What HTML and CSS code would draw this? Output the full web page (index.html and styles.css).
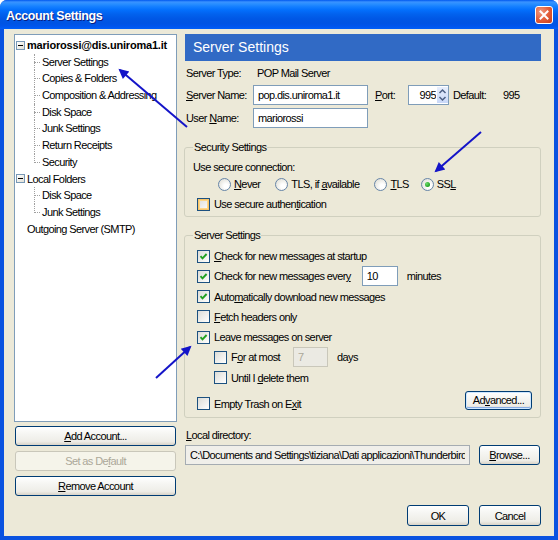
FILE: index.html
```html
<!DOCTYPE html>
<html>
<head>
<meta charset="utf-8">
<title>Account Settings</title>
<link rel="stylesheet" href="styles.css">
</head>
<body>
<div class="window">
  <div class="titlebar">
    <span class="title">Account Settings</span>
    <span class="close"><svg width="10" height="10" viewBox="0 0 10 10"><path d="M1.5 1.5 L8.5 8.5 M8.5 1.5 L1.5 8.5" stroke="#fff" stroke-width="2" stroke-linecap="square"/></svg></span>
  </div>
  <div class="client">
    <div class="leftcol">
      <div class="tree">
        <div class="row root"><span class="pm"></span><b>mariorossi@dis.uniroma1.it</b></div>
        <div class="leaf">Server Settings</div>
        <div class="leaf">Copies &amp; Folders</div>
        <div class="leaf">Composition &amp; Addressing</div>
        <div class="leaf">Disk Space</div>
        <div class="leaf">Junk Settings</div>
        <div class="leaf">Return Receipts</div>
        <div class="leaf last">Security</div>
        <div class="row root"><span class="pm"></span>Local Folders</div>
        <div class="leaf">Disk Space</div>
        <div class="leaf last">Junk Settings</div>
        <div class="row plain">Outgoing Server (SMTP)</div>
      </div>
      <div class="leftbtns">
        <button class="btn wide"><u>A</u>dd Account...</button>
        <button class="btn wide disabled">Set as De<u>f</u>ault</button>
        <button class="btn wide"><u>R</u>emove Account</button>
      </div>
    </div>
    <div class="rightcol">
      <div class="header">Server Settings</div>
      <div class="fields">
        <div class="frow typerow"><span class="flabel">Server Type:</span><span class="fvalue">POP Mail Server</span></div>
        <div class="frow"><span class="flabel"><u>S</u>erver Name:</span><input class="tb name" type="text" value="pop.dis.uniroma1.it"><span class="portlabel"><u>P</u>ort:</span><span class="port"><input class="portinput" type="text" value="995"><svg class="spin" width="11" height="16" viewBox="0 0 11 16"><path d="M2.5 6 L5.5 3 L8.5 6" fill="none" stroke="#4D6185" stroke-width="1.5"/><path d="M2.5 10 L5.5 13 L8.5 10" fill="none" stroke="#4D6185" stroke-width="1.5"/></svg></span><span class="deflabel">Default:</span><span class="defvalue">995</span></div>
        <div class="frow userrow"><span class="flabel">User <u>N</u>ame:</span><input class="tb name" type="text" value="mariorossi"></div>
      </div>
      <fieldset class="group security">
        <legend>Security Settings</legend>
        <div class="line">Use secure connection:</div>
        <div class="radios">
          <span class="opt o1"><span class="rb"></span><span><u>N</u>ever</span></span>
          <span class="opt o2"><span class="rb"></span><span>TLS, if <u>a</u>vailable</span></span>
          <span class="opt o3"><span class="rb"></span><span><u>T</u>LS</span></span>
          <span class="opt"><span class="rb on"></span><span>SS<u>L</u></span></span>
        </div>
        <div class="cbrow auth"><span class="cb hover"></span><span>Use secure authen<u>t</u>ication</span></div>
      </fieldset>
      <fieldset class="group server">
        <legend>Server Settings</legend>
        <div class="cbrow"><span class="cb"><svg width="11" height="11" viewBox="0 0 11 11"><path d="M2.5 5.2 L4.5 7.4 L8.6 3" fill="none" stroke="#21A121" stroke-width="1.9"/></svg></span><span><u>C</u>heck for new messages at startup</span></div>
        <div class="cbrow"><span class="cb"><svg width="11" height="11" viewBox="0 0 11 11"><path d="M2.5 5.2 L4.5 7.4 L8.6 3" fill="none" stroke="#21A121" stroke-width="1.9"/></svg></span><span>Check for new messages ever<u>y</u></span><input class="tb mins" type="text" value="10"><span class="unit">minutes</span></div>
        <div class="cbrow"><span class="cb"><svg width="11" height="11" viewBox="0 0 11 11"><path d="M2.5 5.2 L4.5 7.4 L8.6 3" fill="none" stroke="#21A121" stroke-width="1.9"/></svg></span><span>Auto<u>m</u>atically download new messages</span></div>
        <div class="cbrow"><span class="cb"></span><span><u>F</u>etch headers only</span></div>
        <div class="cbrow"><span class="cb"><svg width="11" height="11" viewBox="0 0 11 11"><path d="M2.5 5.2 L4.5 7.4 L8.6 3" fill="none" stroke="#21A121" stroke-width="1.9"/></svg></span><span>Leave messages on server</span></div>
        <div class="cbrow sub"><span class="cb"></span><span>F<u>o</u>r at most</span><input class="tb days" type="text" value="7" disabled><span class="unit">days</span></div>
        <div class="cbrow sub"><span class="cb"></span><span>Until I <u>d</u>elete them</span></div>
        <div class="lastrow">
          <div class="cbrow trash"><span class="cb"></span><span>Empty Trash on E<u>x</u>it</span></div>
          <button class="btn adv">Ad<u>v</u>anced...</button>
        </div>
      </fieldset>
      <div class="dirlabel"><u>L</u>ocal directory:</div>
      <div class="dirrow">
        <input class="tb dir" type="text" value="C:\Documents and Settings\tiziana\Dati applicazioni\Thunderbird\Profiles" readonly>
        <button class="btn browse"><u>B</u>rowse...</button>
      </div>
      <div class="footer">
        <button class="btn dlg">OK</button>
        <button class="btn dlg">Cancel</button>
      </div>
    </div>
  </div>
  <svg class="annot" width="558" height="540" viewBox="0 0 558 540">
    <defs>
      <marker id="ah" viewBox="0 0 10 10" refX="8" refY="5" markerWidth="6" markerHeight="5" orient="auto" markerUnits="strokeWidth">
        <path d="M0 0 L10 5 L0 10 Z" fill="#1414C8"/>
      </marker>
    </defs>
    <line x1="187" y1="127" x2="120" y2="70" stroke="#1414C8" stroke-width="2" marker-end="url(#ah)"/>
    <line x1="481" y1="132" x2="436" y2="171" stroke="#1414C8" stroke-width="2" marker-end="url(#ah)"/>
    <line x1="156" y1="378" x2="190" y2="347" stroke="#1414C8" stroke-width="2" marker-end="url(#ah)"/>
  </svg>
</div>
</body>
</html>
```

FILE: styles.css
```css
* { box-sizing: border-box; }
html, body { margin: 0; padding: 0; }
body {
  width: 558px;
  height: 540px;
  overflow: hidden;
  font-family: "Liberation Sans", Arial, sans-serif;
  font-size: 11px;
  letter-spacing: -0.6px;
  color: #000;
  background: #fff;
}
u { text-decoration: underline; text-underline-offset: 1px; }

.window {
  position: relative;
  width: 558px;
  height: 540px;
  display: flex;
  flex-direction: column;
  background: #0A52E0;
  border-radius: 7px 7px 0 0;
  overflow: hidden;
}
.titlebar {
  height: 29px;
  flex: none;
  display: flex;
  align-items: center;
  justify-content: space-between;
  padding: 0 5px 0 6px;
  background: linear-gradient(#0058EE 0px, #3A93FF 2px, #288EFF 4px, #127DFF 7px, #036FFC 10px, #0262EE 14px, #0057E5 19px, #0054E3 23px, #0055EB 26px, #005BF5 28px, #0060F8 29px);
}
.title {
  color: #fff;
  font-weight: bold;
  font-size: 12.5px;
  letter-spacing: -0.4px;
  text-shadow: 1px 1px 0 #0A1E80;
  margin-top: 2px;
}
.close {
  width: 18px;
  height: 18px;
  border: 1px solid #fff;
  border-radius: 3px;
  background: radial-gradient(circle at 30% 30%, #F09A80, #E35E3A 50%, #C63C17);
  display: flex;
  align-items: center;
  justify-content: center;
  margin-top: 1px;
}

.client {
  flex: 1;
  margin: 0 4px 4px 4px;
  background: #ECE9D8;
  display: flex;
  padding: 5px 13px 0 10px;
  gap: 7px;
}

/* left column */
.leftcol {
  width: 163px;
  flex: none;
  display: flex;
  flex-direction: column;
}
.tree {
  height: 388px;
  background: #fff;
  border: 1px solid #7F9DB9;
  padding-top: 2px;
}
.row, .leaf {
  height: 16.7px;
  line-height: 16.7px;
  white-space: nowrap;
  position: relative;
}
.root { display: flex; align-items: center; }
.root b { letter-spacing: -0.2px; }
.pm {
  width: 9px;
  height: 9px;
  border: 1px solid #7898B5;
  margin: 0 2px 0 1px;
  background: linear-gradient(135deg, #fff, #E2E0D6);
  position: relative;
  flex: none;
}
.pm::after {
  content: "";
  position: absolute;
  left: 1px;
  top: 3px;
  width: 5px;
  height: 1px;
  background: #000;
}
.plain { padding-left: 12px; }
.leaf { padding-left: 27px; }
.leaf::before {
  content: "";
  position: absolute;
  left: 19px;
  top: 8px;
  width: 6px;
  border-top: 1px dotted #A0A0A0;
}
.leaf::after {
  content: "";
  position: absolute;
  left: 19px;
  top: 0;
  bottom: 0;
  border-left: 1px dotted #A0A0A0;
}
.leaf.last::after { bottom: 8px; }

.leftbtns {
  display: flex;
  flex-direction: column;
  gap: 5px;
  margin-top: 4px;
}

/* buttons */
.btn {
  font-family: inherit;
  font-size: 11px;
  letter-spacing: -0.6px;
  color: #000;
  height: 21px;
  padding: 0;
  border: 1px solid #003C74;
  border-radius: 3px;
  background: linear-gradient(#FFFFFF 0%, #F6F6F3 35%, #EEEDE7 80%, #D8D3C8 100%);
}
.btn.wide { width: 161px; margin-left: 1px; height: 20px; }
.btn.disabled {
  color: #ACA899;
  border-color: #C9C7BA;
  background: #F5F4EA;
}
.btn.adv {
  width: 67px;
  height: 19px;
  box-shadow: inset 0 0 0 1px #CEE7FF, inset 0 -1px 0 1px #89ADE4;
}
.btn.browse { width: 61px; height: 20px; }
.btn.dlg { width: 62px; height: 21px; }

/* right column */
.rightcol {
  width: 357px;
  flex: none;
  display: flex;
  flex-direction: column;
}
.header {
  margin: 0 0 0 1px;
  height: 27px;
  background: #316AC5;
  color: #fff;
  font-size: 14px;
  letter-spacing: 0;
  line-height: 27px;
  padding-left: 8px;
}
.fields {
  margin-top: 4px;
  padding-left: 2px;
}
.frow {
  display: flex;
  align-items: center;
  height: 20px;
  margin-top: 4px;
}
.frow.typerow { height: 16px; margin-top: 0; }
.frow.userrow { margin-top: 3px; }
.flabel { width: 67px; flex: none; }
.fvalue { padding-left: 4px; }
.tb {
  font-family: inherit;
  font-size: 11px;
  letter-spacing: -0.6px;
  height: 20px;
  border: 1px solid #7F9DB9;
  background: #fff;
  padding: 0 4px;
  margin: 0;
  color: #000;
  outline: none;
}
.tb.name { width: 115px; }
.portlabel { margin-left: 7px; width: 33px; flex: none; }
.port {
  width: 41px;
  height: 20px;
  border: 1px solid #7F9DB9;
  background: #fff;
  display: flex;
  align-items: center;
  flex: none;
}
.portinput {
  font-family: inherit;
  font-size: 11px;
  letter-spacing: -0.6px;
  width: 28px;
  border: 0;
  padding: 0 1px 0 0;
  text-align: right;
  outline: none;
  background: transparent;
}
.spin {
  background: linear-gradient(#E8EFFD, #C9D8F8);
}
.deflabel { margin-left: 4px; width: 50px; flex: none; }

.group {
  margin: 0;
  border: 1px solid #D0D0BF;
  border-radius: 3px;
  min-inline-size: 0;
}
.group legend {
  padding: 0 1px;
  line-height: 14px;
  color: #000;
}
.security {
  margin-top: 12px;
  padding: 5px 8px 4px 8px;
}
.line { height: 16px; line-height: 16px; }
.radios {
  display: flex;
  align-items: center;
  height: 16px;
  margin-top: 1px;
  padding-left: 25px;
}
.opt {
  display: flex;
  align-items: center;
  gap: 3px;
}
.opt.o1 { margin-right: 15px; }
.opt.o2 { margin-right: 15px; }
.opt.o3 { margin-right: 12px; }
.rb {
  width: 13px;
  height: 13px;
  border-radius: 50%;
  border: 1px solid #6685A8;
  background: radial-gradient(circle at 65% 65%, #fff 20%, #E3E2DA 80%);
  position: relative;
  flex: none;
}
.rb.on::after {
  content: "";
  position: absolute;
  left: 3px;
  top: 3px;
  width: 5px;
  height: 5px;
  border-radius: 50%;
  background: radial-gradient(circle at 35% 35%, #6DDB6D, #21A121 70%);
}
.cbrow {
  display: flex;
  align-items: center;
  gap: 4px;
  height: 20.25px;
  padding-left: 4px;
  white-space: nowrap;
}
.cbrow.auth { height: 16px; margin-top: 4px; }
.cbrow.sub { padding-left: 21px; }
.cb {
  width: 13px;
  height: 13px;
  border: 1px solid #1C5180;
  background: linear-gradient(135deg, #DCDCD7, #FFFFFF);
  display: flex;
  align-items: center;
  justify-content: center;
  flex: none;
}
.cb svg { display: block; }
.cb.hover {
  box-shadow: inset 0 0 0 1px #F9C56A, inset 0 0 0 2px #FDD889;
}
.server {
  margin-top: 11px;
  padding: 4px 8px 6px 8px;
}
.tb.mins { width: 36px; height: 20px; margin-left: 7px; }
.tb.days {
  width: 35px;
  height: 20px;
  margin-left: 9px;
  background: #EBEAE3;
  border-color: #C9C7BA;
  color: #ACA899;
}
.unit { margin-left: 5px; }
.lastrow {
  display: flex;
  justify-content: space-between;
  align-items: flex-start;
  margin-top: 3px;
  height: 20px;
}
.cbrow.trash { height: 14px; margin-top: 6px; }

.dirlabel {
  margin-top: 10px;
  line-height: 14px;
  padding-left: 2px;
}
.dirrow {
  display: flex;
  align-items: center;
  margin-top: 3px;
  padding-left: 1px;
}
.tb.dir {
  width: 285px;
  height: 20px;
  background: #F0EFEA;
  border-color: #A5ACB2;
}
.btn.browse { margin-left: 9px; }
.footer {
  margin-top: auto;
  margin-bottom: 10px;
  display: flex;
  justify-content: flex-end;
  gap: 10px;
}

.annot {
  position: absolute;
  left: 0;
  top: 0;
  pointer-events: none;
}
```
